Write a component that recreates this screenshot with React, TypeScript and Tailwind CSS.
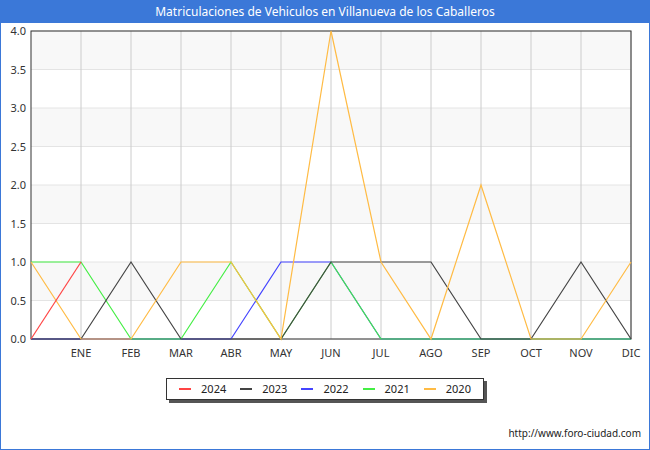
const X0 = 30, Y0 = 338, DX = 50, DY = 77;
const px = (i: number) => X0 + i * DX;
const py = (v: number) => Y0 - v * DY;
const months = ["ENE","FEB","MAR","ABR","MAY","JUN","JUL","AGO","SEP","OCT","NOV","DIC"];

const series = [
  { label: "2022", color: "#4444ff", data: [0,0,0,0,0,1,1,0,0,0,0,0,0] },
  { label: "2021", color: "#44ee44", data: [1,1,0,0,1,0,1,0,0,0,0,0,0] },
  { label: "2023", color: "#444444", data: [0,0,1,0,0,0,1,1,1,0,0,1,0] },
  { label: "2020", color: "#ffbb44", data: [1,0,0,1,1,0,4,1,0,2,0,0,1] },
  { label: "2024", color: "#ff4444", data: [0,1] },
];
const legend = [
  { label: "2024", color: "#ff4444" },
  { label: "2023", color: "#444444" },
  { label: "2022", color: "#4444ff" },
  { label: "2021", color: "#44ee44" },
  { label: "2020", color: "#ffbb44" },
];

export default function App() {
  return (
    <div className="w-[650px] h-[450px] border border-[#3b78d8] bg-white flex flex-col font-['DejaVu_Sans',sans-serif]">
      <div className="h-[22px] bg-[#3b78d8] text-white text-[12px] flex items-center justify-center">
        Matriculaciones de Vehiculos en Villanueva de los Caballeros
      </div>
      <svg width="648" height="426" className="block">
        <g transform="translate(0,-22)">
          {[0,1,2,3,4,5,6,7].map(k => (
            <rect key={k} x={X0} y={py((k + 1) * 0.5)} width={600} height={38.5} fill={k % 2 ? "#f8f8f8" : "#ffffff"} />
          ))}
          {[0,1,2,3,4,5,6,7,8].map(k => (
            <g key={k}>
              <line x1={X0} x2={630} y1={py(k * 0.5)} y2={py(k * 0.5)} stroke="#e4e4e4" />
              <text x={25} y={py(k * 0.5) + 4} fontSize="11" textAnchor="end" fill="#333">{(k * 0.5).toFixed(1)}</text>
            </g>
          ))}
          {months.map((m, i) => (
            <g key={m}>
              <line x1={px(i + 1)} x2={px(i + 1)} y1={30} y2={Y0} stroke="#cccccc" />
              <text x={px(i + 1)} y={356} fontSize="11" textAnchor="middle" fill="#333">{m}</text>
            </g>
          ))}
          <rect x={X0} y={30} width={600} height={308} fill="none" stroke="#333" />
          {series.map(s => (
            <polyline key={s.label} fill="none" stroke={s.color} strokeWidth="1.2"
              points={s.data.map((v, i) => `${px(i)},${py(v)}`).join(" ")} />
          ))}
        </g>
        <foreignObject x="0" y="355" width="648" height="30">
          <div className="flex justify-center">
            <div className="flex items-center gap-[14px] px-3 h-[22px] border border-[#333] bg-white shadow-[3px_3px_0_#555] text-[11px] text-[#222]">
              {legend.map(l => (
                <div key={l.label} className="flex items-center gap-[10px]">
                  <span className="inline-block w-[12px] h-[2px]" style={{ backgroundColor: l.color }} />
                  <span>{l.label}</span>
                </div>
              ))}
            </div>
          </div>
        </foreignObject>
        <text x={640} y={414} fontSize="10" textAnchor="end" fill="#222">http://www.foro-ciudad.com</text>
      </svg>
    </div>
  );
}
